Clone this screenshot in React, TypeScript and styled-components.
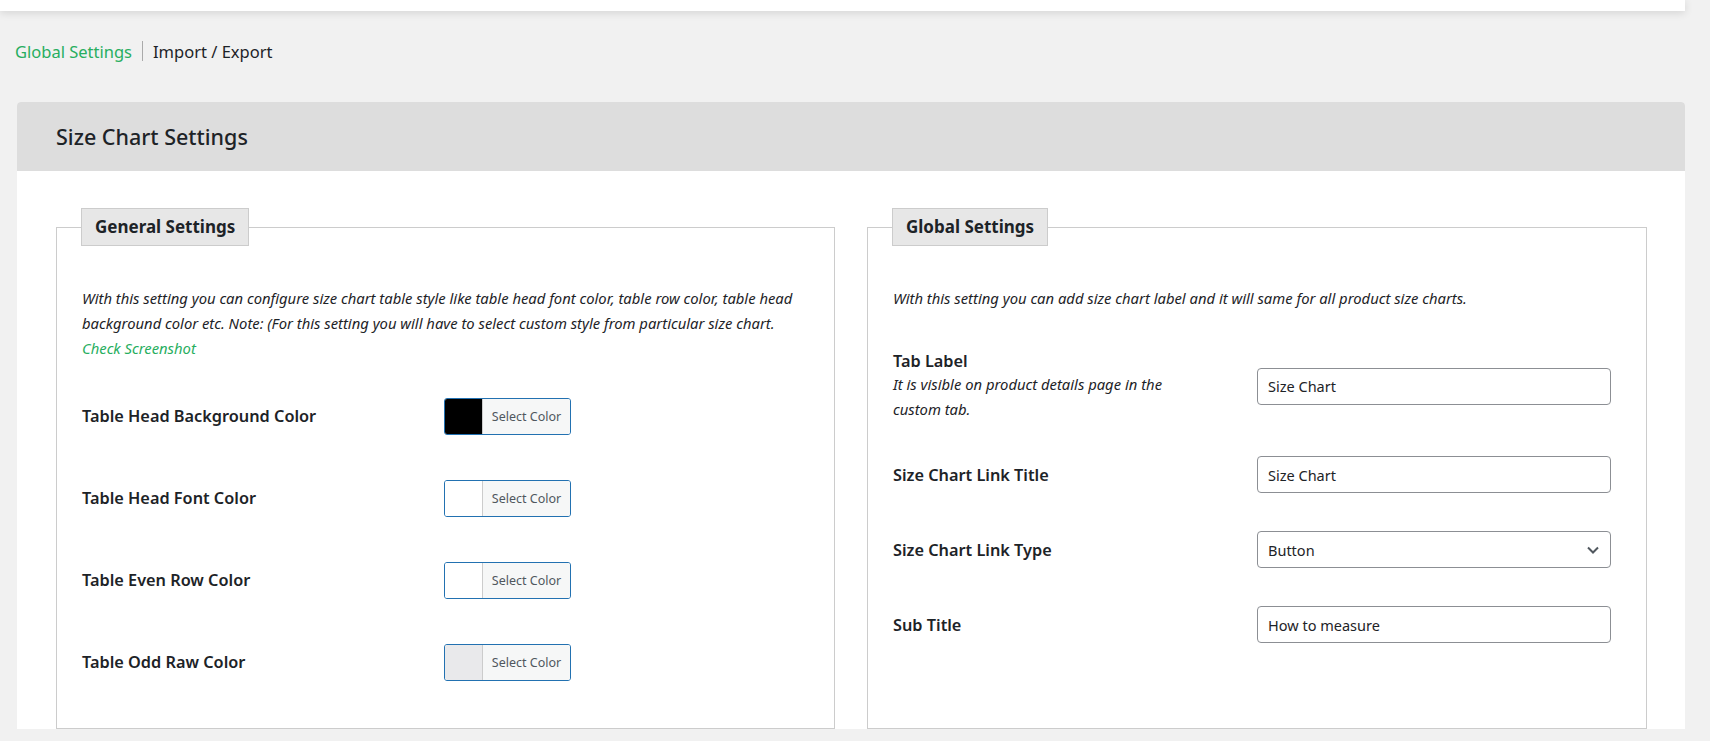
import React from "react";
import styled, { createGlobalStyle } from "styled-components";

const G = createGlobalStyle`
  body { margin:0; background:#f1f1f1; font-family:"Noto Sans","Open Sans",sans-serif; color:#1d2327; }
  * { box-sizing:border-box; }
`;
const TopBar = styled.div`height:11px;width:1685px;background:#fff;box-shadow:0 2px 8px rgba(0,0,0,.12);`;
const Nav = styled.div`display:flex;align-items:center;padding:18px 0 0 15px;height:62px;font-size:16.5px;`;
const NavLink = styled.span<{ $active?: boolean }>`color:${p => (p.$active ? "#27ae60" : "#1d2327")};`;
const Sep = styled.span`width:1px;height:20px;background:#aaa;margin:0 10px;`;
const Card = styled.div`margin:29px 25px 0 17px;background:#fff;border-radius:4px 4px 0 0;`;
const CardHead = styled.div`height:69px;background:#dddddd;border-radius:4px 4px 0 0;display:flex;align-items:center;padding-left:39px;font-size:21.5px;font-weight:500;`;
const Body = styled.div`display:grid;grid-template-columns:779px 780px;gap:32px;padding:37px 0 0 39px;`;
const Fieldset = styled.fieldset`margin:0;border:1px solid #ccc;padding:0 23px 0 25px;height:521px;min-width:0;`;
const Legend = styled.legend`padding:0 13px;height:38px;line-height:36px;background:#e7e7e7;border:1px solid #ccc;font-weight:700;font-size:17px;margin-left:-1px;`;
const Desc = styled.p<{ $mb: number }>`font-style:italic;font-size:14.8px;line-height:25px;margin:40px 0 ${p => p.$mb}px;color:#1d2327;`;
const A = styled.span`color:#27ae60;`;
const Row = styled.div`display:flex;align-items:center;height:82px;`;
const Label = styled.div`width:362px;font-weight:600;font-size:16.3px;`;
const Picker = styled.div`display:flex;width:127px;height:37px;border:1px solid #2271b1;border-radius:3px;overflow:hidden;`;
const Swatch = styled.div<{ $c: string }>`width:38px;background:${p => p.$c};border-right:1px solid #ccc;`;
const PickText = styled.div`flex:1;background:#f6f7f7;font-size:12.5px;display:flex;align-items:center;justify-content:center;color:#50575e;`;
const RRow = styled.div<{ $h: number }>`display:flex;align-items:center;height:${p => p.$h}px;`;
const RLabel = styled.div`width:364px;font-weight:600;font-size:16.3px;`;
const Sub = styled.div`font-weight:400;font-style:italic;font-size:14.8px;line-height:25px;width:300px;`;
const Input = styled.div`width:354px;height:37px;border:1px solid #8c8f94;border-radius:4px;display:flex;align-items:center;justify-content:space-between;padding:0 10px;font-size:14.5px;`;

const colors: [string, string][] = [
  ["Table Head Background Color", "#000"],
  ["Table Head Font Color", "#fff"],
  ["Table Even Row Color", "#fff"],
  ["Table Odd Raw Color", "#e9e9eb"],
];

export default function App() {
  return (
    <>
      <G />
      <TopBar />
      <Nav>
        <NavLink $active>Global Settings</NavLink>
        <Sep />
        <NavLink>Import / Export</NavLink>
      </Nav>
      <Card>
        <CardHead>Size Chart Settings</CardHead>
        <Body>
          <Fieldset>
            <Legend>General Settings</Legend>
            <Desc $mb={14}>
              With this setting you can configure size chart table style like table head font color, table row color, table head background color etc. Note: (For this setting you will have to select custom style from particular size chart. <A>Check Screenshot</A>
            </Desc>
            {colors.map(([l, c]) => (
              <Row key={l}>
                <Label>{l}</Label>
                <Picker>
                  <Swatch $c={c} />
                  <PickText>Select Color</PickText>
                </Picker>
              </Row>
            ))}
          </Fieldset>
          <Fieldset>
            <Legend>Global Settings</Legend>
            <Desc $mb={34}>With this setting you can add size chart label and it will same for all product size charts.</Desc>
            <RRow $h={82}>
              <RLabel>
                Tab Label
                <Sub>It is visible on product details page in the custom tab.</Sub>
              </RLabel>
              <Input>Size Chart</Input>
            </RRow>
            <RRow $h={95}>
              <RLabel>Size Chart Link Title</RLabel>
              <Input>Size Chart</Input>
            </RRow>
            <RRow $h={55}>
              <RLabel>Size Chart Link Type</RLabel>
              <Input>
                Button
                <svg width="14" height="14" viewBox="0 0 14 14"><path d="M2 4.5l5 5 5-5" fill="none" stroke="#50575e" strokeWidth="2" /></svg>
              </Input>
            </RRow>
            <RRow $h={95}>
              <RLabel>Sub Title</RLabel>
              <Input>How to measure</Input>
            </RRow>
          </Fieldset>
        </Body>
      </Card>
    </>
  );
}
